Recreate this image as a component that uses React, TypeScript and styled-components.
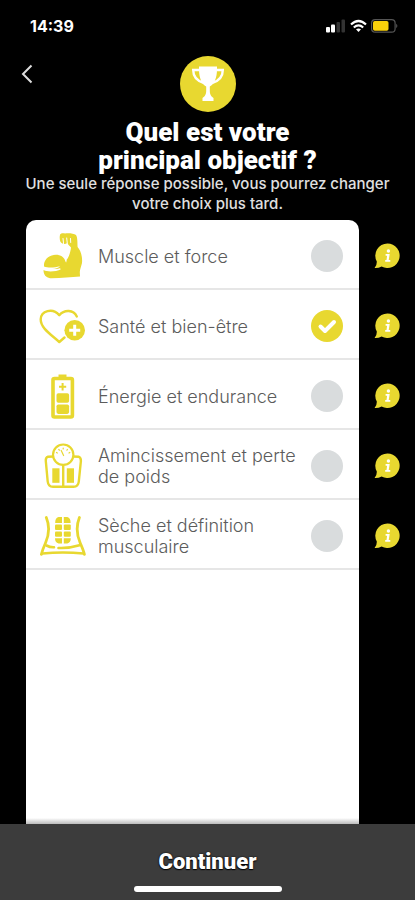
import React, { useState } from "react";
import styled, { createGlobalStyle } from "styled-components";

const yellow = "#e8d830";

const GlobalStyle = createGlobalStyle`
  * { box-sizing: border-box; }
  body {
    margin: 0;
    background: #000;
    font-family: Inter, "Liberation Sans", sans-serif;
  }
`;

const Screen = styled.div`
  display: flex;
  flex-direction: column;
  min-height: 100vh;
  background: #000;
  color: #fff;
`;

const StatusBar = styled.div`
  display: flex;
  align-items: center;
  justify-content: space-between;
  height: 52px;
  padding: 0 16px 0 30px;
`;

const Clock = styled.time`
  font-size: 16px;
  font-weight: 700;
  line-height: 20px;
`;

const StatusIcons = styled.div`
  display: flex;
  align-items: center;
  gap: 4px;
`;

const Header = styled.header`
  display: grid;
  grid-template-columns: 56px 1fr 56px;
  justify-items: center;
  padding-top: 4px;
`;

const BackButton = styled.button`
  display: flex;
  align-items: center;
  justify-content: center;
  width: 36px;
  height: 36px;
  padding: 0;
  border: 0;
  background: none;
  color: #ddd;
`;

const Badge = styled.div`
  display: flex;
  align-items: center;
  justify-content: center;
  width: 56px;
  height: 56px;
  border-radius: 50%;
  background: ${yellow};
`;

const Intro = styled.div`
  padding: 6px 16px;
  text-align: center;
`;

const Title = styled.h1`
  margin: 0;
  font-family: Roboto, "Noto Sans", sans-serif;
  font-size: 26px;
  font-weight: 900;
  line-height: 28px;
`;

const Subtitle = styled.p`
  margin: 0;
  font-size: 15px;
  font-weight: 500;
  line-height: 20px;
  color: #e0e0e0;
`;

const Content = styled.main`
  display: flex;
  flex: 1;
  padding-left: 26px;
`;

const Card = styled.fieldset`
  flex: 1;
  min-width: 0;
  margin: 0;
  padding: 0;
  border: 0;
  border-radius: 10px 10px 0 0;
  background: linear-gradient(to top, #bbb, #fff 6px);
`;

const Option = styled.label`
  display: grid;
  grid-template-columns: 48px 1fr 32px;
  column-gap: 12px;
  align-items: center;
  height: 70px;
  padding: 4px 16px 0 12px;
  border-bottom: 2px solid #e6e6e6;
  color: #5c5c5c;
  font-size: 18px;
  font-weight: 300;
  line-height: 21px;
`;

const Check = styled.span`
  display: grid;
  width: 32px;
  height: 32px;

  > * { grid-area: 1 / 1; }
`;

const Radio = styled.input`
  appearance: none;
  width: 32px;
  height: 32px;
  margin: 0;
  border-radius: 50%;
  background: #d9dcdd;

  &:checked { background: ${yellow}; }
`;

const CheckMark = styled.svg`
  pointer-events: none;
`;

const InfoColumn = styled.div`
  display: flex;
  flex-direction: column;
  width: 56px;
`;

const InfoButton = styled.button`
  display: flex;
  align-items: center;
  justify-content: center;
  height: 70px;
  padding: 2px 0 0;
  border: 0;
  background: none;
`;

const Footer = styled.footer`
  display: flex;
  flex-direction: column;
  align-items: center;
  height: 76px;
  padding-top: 20px;
  gap: 6px;
  background: #3c3c3c;
`;

const ContinueButton = styled.button`
  padding: 0 16px;
  border: 0;
  background: none;
  color: #fff;
  font-family: Roboto, "Noto Sans", sans-serif;
  font-size: 22px;
  font-weight: 900;
  line-height: 36px;
  text-shadow: 0 0 2px #000, 0 1px 1px #000;
`;

const HomeIndicator = styled.div`
  width: 148px;
  height: 6px;
  border-radius: 3px;
  background: #fff;
`;

const Art = ({ children }: { children: React.ReactNode }) => (
  <svg width="48" height="48" viewBox="0 0 48 48" fill="none" stroke={yellow} strokeWidth="2.4" strokeLinecap="round" strokeLinejoin="round" aria-hidden="true">
    {children}
  </svg>
);

const MuscleIcon = () => (
  <Art>
    <g fill={yellow} stroke="none">
      <path d="M22 3C22 1.600 24 1 27 1.400C31 1 36 1.400 38 3C39.500 5 39.400 10 39.600 15C43 19 44.600 25 44 31C43 35 42 37 41.800 40L42 44.500C33 44.800 22 46.500 12 46.300C8 45.300 5.500 43 5.500 38C10 40.400 18 39.600 23 37.200C28 35.500 29.500 31 28.500 28C31 25 32.500 20 33 15.500C31.500 13.800 30 12.500 29.200 11C27 12.700 23.500 12 22.300 9.500C21.600 7 21.500 5 22 3Z" />
      <path d="M6 32C7 26.500 12 22.800 18 22.800C24 22.800 28 26.900 27.500 31.500C26 35.500 20 37.600 14.500 37C18 36.700 21 35.600 22 34.200C16 36 10 36 6 34.600Z" />
      <path d="M22 36L28.300 29L31 36L24 40Z" />
    </g>
    <path d="M25 6.500L25.600 12M28.700 6L29.300 11.500M32.500 6.500L32.700 10.500" stroke="#fff" strokeWidth="1" />
  </Art>
);

const HeartIcon = () => (
  <Art>
    <path d="M26.500 35.500L21.300 40C13 32.500 2.500 26 2.700 17.300C3 9 14.500 5.200 21.300 13.200C26.500 7.300 35.500 7.600 38.800 14.500" />
    <circle cx="36.700" cy="28.300" r="10.300" fill={yellow} stroke="none" />
    <path d="M36.700 22.800V33.800M31.200 28.300H42.200" stroke="#fff" strokeWidth="3" strokeLinecap="butt" />
  </Art>
);

const BatteryIcon = () => (
  <Art>
    <rect x="15" y="6.500" width="19.400" height="38.500" rx="1.500" strokeWidth="3.600" />
    <path d="M20.500 5V2.500H28.500V5Z" fill={yellow} stroke="none" />
    <path d="M24.600 11V18.400M21 14.700H28.200" strokeWidth="2" strokeLinecap="butt" />
    <rect x="18.500" y="21.300" width="12.600" height="9.400" rx="1.800" fill={yellow} stroke="none" />
    <rect x="18.500" y="32.500" width="12.600" height="9.400" rx="1.800" fill={yellow} stroke="none" />
  </Art>
);

const ScaleIcon = () => (
  <Art>
    <path d="M15.500 14.500L10 14.700Q7.500 15.500 7.800 19L9.700 39.500Q10.200 44.600 15 44.800H35.500Q40.300 44.600 40.800 39.500L42.900 19Q43 15.500 40.500 14.700L35 14.500M25.200 24V44.500" strokeWidth="2.400" />
    <circle cx="25.200" cy="12.700" r="10.200" fill="#fff" strokeWidth="2.200" />
    <path d="M23.200 8.500L25.600 13.500M18.500 10.500L19.300 11M20.800 7.500L21.400 8.200M25.200 6V7M29.400 7.500L28.900 8.200M31.800 10.500L31 11" strokeWidth="1.200" />
    <rect x="14.300" y="26.300" width="7.200" height="14.500" fill={yellow} stroke="none" />
    <rect x="28.800" y="26.300" width="7.200" height="14.500" fill={yellow} stroke="none" />
  </Art>
);

const AbsIcon = () => (
  <Art>
    <path d="M8.300 5.500C12.200 15 11 23 7.500 31C5.700 35 4.300 38.500 3.400 42.400M41.400 5.500C37.600 15 38.800 23 42.200 31C44 35 45.500 38.500 46.400 42.400" strokeWidth="2.800" />
    <path d="M8.500 33.500Q12 35.500 16 35.300M20.500 36Q31 36.500 41.500 33.300M4.500 41.500Q24.800 39.500 45.500 41.500" strokeWidth="2.600" />
    <g fill={yellow} stroke="none">
      <path d="M24 5V11H17.200Q17 6 20.500 5ZM25.800 5V11H32.600Q32.800 6 29.300 5Z" />
      <rect x="17" y="12.500" width="7" height="5.400" rx="1" />
      <rect x="25.800" y="12.500" width="7" height="5.400" rx="1" />
      <rect x="17" y="19.400" width="7" height="5.400" rx="1" />
      <rect x="25.800" y="19.400" width="7" height="5.400" rx="1" />
      <path d="M17 26.300H24V31.500H20.500Q17 30.500 17 26.300ZM25.800 26.300H32.800Q32.800 30.500 29.300 31.500H25.800Z" />
    </g>
  </Art>
);

const TrophyIcon = () => (
  <svg width="34" height="36" viewBox="0 0 34 36" fill="none" aria-hidden="true">
    <path d="M8 0.500H26V3.500C26 12 23 18.500 18.800 20.500V25C18.800 29 21 31 22.500 32V35H11.500V32C13 31 15.200 29 15.200 25V20.500C11 18.500 8 12 8 3.500Z" fill="#fff" />
    <path d="M8.500 4H2.200C2.200 10 6 14.800 12.500 16.800M25.500 4H31.800C31.800 10 28 14.800 21.500 16.800" stroke="#fff" strokeWidth="2.400" />
  </svg>
);

const InfoIcon = () => (
  <svg width="26" height="26" viewBox="0 0 26 26" aria-hidden="true">
    <path d="M13.500 0.500A12.200 12.200 0 1 1 7.600 23.400Q4.500 25.200 0.600 25Q2.900 22.800 2.800 18.600A12.200 12.200 0 0 1 13.500 0.500Z" fill={yellow} />
    <g fill="#fff">
      <circle cx="14.400" cy="8" r="1.700" />
      <path d="M11.600 11H15.700L14.700 17H16.300V18.800H11.200V17H12.500L13.100 12.700H11.600Z" />
    </g>
  </svg>
);

const SignalIcon = () => (
  <svg width="20" height="14" viewBox="0 0 20 14" aria-hidden="true">
    <rect x="0" y="8" width="4" height="5.500" rx="1" fill="#fff" />
    <rect x="5" y="5.500" width="4" height="8" rx="1" fill="#fff" />
    <rect x="10.500" y="3" width="3.500" height="10.500" rx="1" fill="#333" />
    <rect x="15.500" y="0.500" width="3.500" height="13" rx="1" fill="#333" />
  </svg>
);

const WifiIcon = () => (
  <svg width="17" height="14" viewBox="0 0 17 14" fill="none" stroke="#fff" strokeWidth="2.200" aria-hidden="true">
    <path d="M1 5.500Q8.500 -1.500 16 5.500M3.800 8.500Q8.500 4.300 13.200 8.500" />
    <path d="M6 10.300Q8.500 8.500 11 10.300L8.500 13Z" fill="#fff" stroke="none" />
  </svg>
);

const BatteryStatusIcon = () => (
  <svg width="28" height="14" viewBox="0 0 28 14" aria-hidden="true">
    <rect x="0.600" y="0.600" width="23.500" height="12.600" rx="3.500" fill="none" stroke="#555" strokeWidth="1.200" />
    <rect x="2" y="2" width="15.500" height="9.800" rx="1.800" fill="#fbd20b" />
    <path d="M25.300 4.800Q27.300 7 25.300 9.200Z" fill="#666" />
  </svg>
);

const options = [
  { id: "muscle", label: "Muscle et force", Icon: MuscleIcon },
  { id: "sante", label: "Santé et bien-être", Icon: HeartIcon },
  { id: "energie", label: "Énergie et endurance", Icon: BatteryIcon },
  { id: "poids", label: "Amincissement et perte de poids", Icon: ScaleIcon },
  { id: "seche", label: "Sèche et définition musculaire", Icon: AbsIcon },
];

export default function App() {
  const [selected, setSelected] = useState("sante");

  return (
    <Screen>
      <GlobalStyle />
      <StatusBar>
        <Clock>14:39</Clock>
        <StatusIcons>
          <SignalIcon />
          <WifiIcon />
          <BatteryStatusIcon />
        </StatusIcons>
      </StatusBar>
      <Header>
        <BackButton type="button" aria-label="Retour">
          <svg width="14" height="20" viewBox="0 0 14 20" fill="none" stroke="currentColor" strokeWidth="2" aria-hidden="true">
            <path d="M10.500 1.500L2 10L10.500 18.500" />
          </svg>
        </BackButton>
        <Badge>
          <TrophyIcon />
        </Badge>
      </Header>
      <Intro>
        <Title>
          Quel est votre
          <br />
          principal objectif ?
        </Title>
        <Subtitle>
          Une seule réponse possible, vous pourrez changer votre choix plus tard.
        </Subtitle>
      </Intro>
      <Content>
        <Card aria-label="Objectif principal">
          {options.map(({ id, label, Icon }) => (
            <Option key={id}>
              <Icon />
              <span>{label}</span>
              <Check>
                <Radio
                  type="radio"
                  name="objectif"
                  value={id}
                  checked={selected === id}
                  onChange={() => setSelected(id)}
                />
                {selected === id && (
                  <CheckMark width="32" height="32" viewBox="0 0 32 32" fill="none" aria-hidden="true">
                    <path d="M9.500 16.500L14 21L23 12" stroke="#fff" strokeWidth="4" strokeLinecap="round" strokeLinejoin="round" />
                  </CheckMark>
                )}
              </Check>
            </Option>
          ))}
        </Card>
        <InfoColumn>
          {options.map(({ id, label }) => (
            <InfoButton key={id} type="button" aria-label={`Informations : ${label}`}>
              <InfoIcon />
            </InfoButton>
          ))}
        </InfoColumn>
      </Content>
      <Footer>
        <ContinueButton type="button">Continuer</ContinueButton>
        <HomeIndicator />
      </Footer>
    </Screen>
  );
}
